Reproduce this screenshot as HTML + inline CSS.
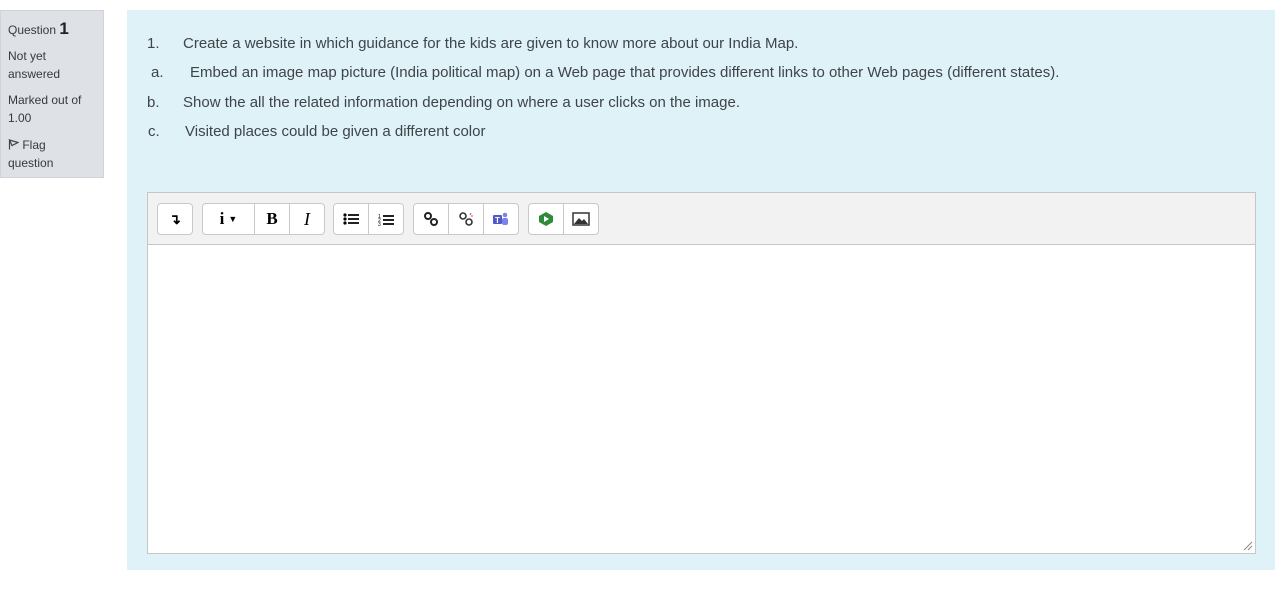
<!DOCTYPE html>
<html><head><style>
body{margin:0;width:1275px;height:590px;background:#fff;font-family:"Liberation Sans",sans-serif;position:relative;overflow:hidden}
.info{position:absolute;left:0;top:10px;width:102px;height:166px;background:#dee2e6;border:1px solid #cfd4d8;font-size:12px;color:#343a40;box-sizing:content-box}
.info div{position:absolute;left:7px;line-height:18px}
.main{position:absolute;left:127px;top:10px;width:1148px;height:560px;background:#def2f8}
.t{position:absolute;font-size:15px;color:#3f4449;white-space:nowrap}
.ed{position:absolute;left:147px;top:192px;width:1107px;height:360px;border:1px solid #c6c6c6;background:#fff}
.tb{position:absolute;left:0;top:0;width:1107px;height:51px;background:#f2f2f2;border-bottom:1px solid #c6c6c6}
.g{position:absolute;top:10px;height:30px;border:1px solid #c9c9c9;border-radius:4px;background:#fff;display:flex}
.g span{display:flex;align-items:center;justify-content:center;border-left:1px solid #c9c9c9;height:30px}
.g span:first-child{border-left:none}
</style></head><body>
<div class="info">
<div style="top:9px">Question <b style="font-size:17px;color:#222">1</b></div>
<div style="top:36px">Not yet<br>answered</div>
<div style="top:80px">Marked out of<br>1.00</div>
<div style="top:125px"><svg width="11" height="11" viewBox="0 0 11 11" style="vertical-align:-1px"><path d="M1.5 0.5V10.5M1.5 1L10 3.5L4 6.5Z" fill="none" stroke="#444" stroke-width="1.2"/></svg> Flag<br>question</div>
</div>
<div class="main"></div>
<div class="t" style="left:147px;top:35px">1.</div><div class="t" style="left:183px;top:35px">Create a website in which guidance for the kids are given to know more about our India Map.</div>
<div class="t" style="left:151px;top:64px">a.</div><div class="t" style="left:190px;top:64px">Embed an image map picture (India political map) on a Web page that provides different links to other Web pages (different states).</div>
<div class="t" style="left:147px;top:94px">b.</div><div class="t" style="left:183px;top:94px">Show the all the related information depending on where a user clicks on the image.</div>
<div class="t" style="left:148px;top:123px">c.</div><div class="t" style="left:185px;top:123px">Visited places could be given a different color</div>
<div class="ed"><div class="tb">
<div class="g" style="left:9px"><span style="width:34px;font-weight:bold;font-size:14px">↴</span></div>
<div class="g" style="left:54px"><span style="width:51px;font-family:'Liberation Serif';font-weight:bold;font-size:17px">i <span style="border:none;font-size:9px;margin-left:4px">▼</span></span><span style="width:34px;font-family:'Liberation Serif';font-weight:bold;font-size:17px">B</span><span style="width:34px;font-family:'Liberation Serif';font-style:italic;font-size:18px">I</span></div>
<div class="g" style="left:185px"><span style="width:34px"><svg width="16" height="12"><circle cx="2" cy="2" r="1.6"/><circle cx="2" cy="6" r="1.6"/><circle cx="2" cy="10" r="1.6"/><path d="M5 2H16M5 6H16M5 10H16" stroke="#222" stroke-width="2"/></svg></span><span style="width:34px"><svg width="16" height="13"><text x="0" y="5" font-size="5">1</text><text x="0" y="9" font-size="5">2</text><text x="0" y="13" font-size="5">3</text><path d="M5 3H16M5 7H16M5 11H16" stroke="#222" stroke-width="2"/></svg></span></div>
<div class="g" style="left:265px"><span style="width:34px"><svg width="14" height="14"><circle cx="4" cy="4" r="3" fill="none" stroke="#222" stroke-width="2"/><circle cx="10" cy="10" r="3" fill="none" stroke="#222" stroke-width="2"/></svg></span><span style="width:34px"><svg width="16" height="14"><circle cx="5" cy="4" r="3" fill="none" stroke="#333" stroke-width="1.6"/><circle cx="11" cy="10" r="3" fill="none" stroke="#333" stroke-width="1.6"/><path d="M13 1L12 3M15 4L13 4" stroke="#e44"/></svg></span><span style="width:34px"><svg width="16" height="14"><rect x="0" y="3" width="9" height="9" rx="1" fill="#5059c9"/><circle cx="12" cy="3" r="2.3" fill="#7b83eb"/><rect x="9" y="6" width="6" height="7" rx="2" fill="#7b83eb"/><text x="2" y="11" font-size="8" fill="#fff" font-weight="bold">T</text></svg></span></div>
<div class="g" style="left:380px"><span style="width:34px"><svg width="16" height="16"><path d="M8 1L15 5V11L8 15L1 11V5Z" fill="#2e8b3a"/><path d="M6 5L11 8L6 11Z" fill="#fff"/></svg></span><span style="width:34px"><svg width="18" height="14"><rect x="1" y="1" width="16" height="12" fill="#fff" stroke="#333" stroke-width="1.5"/><path d="M2 12L7 6L10 9L12 7L16 12Z" fill="#333"/></svg></span></div>
</div>
<svg width="10" height="10" style="position:absolute;right:2px;bottom:2px"><path d="M9 1L1 9M9 5L5 9" stroke="#888"/></svg>
</div>
</body></html>
